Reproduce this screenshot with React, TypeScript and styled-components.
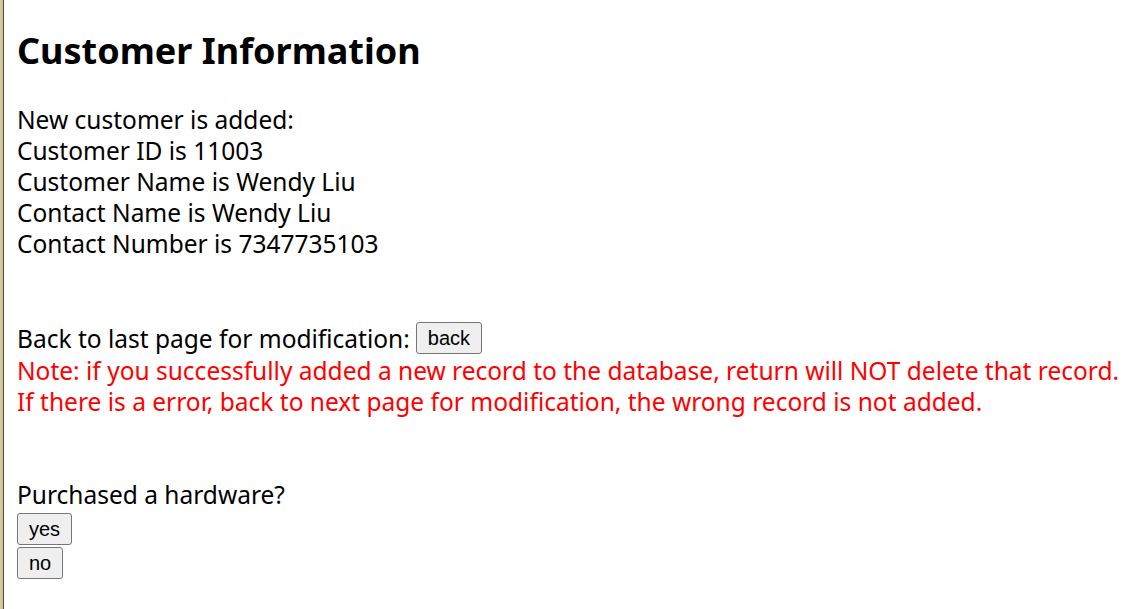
import React from "react";
import styled, { createGlobalStyle } from "styled-components";

const GlobalStyle = createGlobalStyle`
  html, body {
    margin: 0;
    padding: 0;
    background: linear-gradient(to right, #d9cda0 0, #cfc293 3px, #4e4e42 3px, #4e4e42 4px, #ffffff 4px);
    min-height: 100%;
  }
  body {
    min-height: 609px;
  }
`;

const Page = styled.main`
  padding: 27px 0 0 17px;
  font-family: "Noto Sans", "Open Sans", sans-serif;
  font-size: 24.5px;
  line-height: 31px;
  color: #000;
`;

const Title = styled.h1`
  margin: 0 0 29px 0;
  font-family: "Noto Sans", "Open Sans", sans-serif;
  font-size: 36px;
  line-height: 48px;
  font-weight: 700;
`;

const Block = styled.section<{ $gapAfter?: number }>`
  display: flex;
  flex-direction: column;
  margin-bottom: ${(p) => p.$gapAfter ?? 0}px;
`;

const Line = styled.div<{ $tone?: "note" | "plain" }>`
  height: 31px;
  white-space: nowrap;
  color: ${(p) => (p.$tone === "note" ? "#ff0000" : "#000000")};
`;

const ActionRow = styled.div`
  display: flex;
  align-items: center;
  gap: 6px;
  height: 34px;
  white-space: nowrap;
`;

const Button = styled.button`
  box-sizing: border-box;
  height: 32px;
  padding: 1px 11px 0;
  margin: 0;
  font-family: "Liberation Sans", Arial, sans-serif;
  font-size: 20px;
  line-height: 29px;
  color: #000;
  background: #efefef;
  border: 1px solid #767676;
  border-radius: 3px;
  cursor: pointer;
`;

const ButtonStack = styled.div`
  display: flex;
  flex-direction: column;
  align-items: flex-start;
  gap: 2px;
  margin-top: 3px;
`;

const info = [
  "New customer is added:",
  "Customer ID is 11003",
  "Customer Name is Wendy Liu",
  "Contact Name is Wendy Liu",
  "Contact Number is 7347735103",
];

export default function App() {
  return (
    <>
      <GlobalStyle />
      <Page>
        <Title>Customer Information</Title>
        <Block $gapAfter={62}>
          {info.map((t) => (
            <Line key={t}>{t}</Line>
          ))}
        </Block>
        <Block>
          <ActionRow>
            <span>Back to last page for modification:</span>
            <Button type="button">back</Button>
          </ActionRow>
        </Block>
        <Block $gapAfter={62}>
          <Line $tone="note">
            Note: if you successfully added a new record to the database, return will NOT delete that record.
          </Line>
          <Line $tone="note">
            If there is a error, back to next page for modification, the wrong record is not added.
          </Line>
        </Block>
        <Block>
          <Line>Purchased a hardware?</Line>
        </Block>
        <ButtonStack>
          <Button type="button">yes</Button>
          <Button type="button">no</Button>
        </ButtonStack>
      </Page>
    </>
  );
}
